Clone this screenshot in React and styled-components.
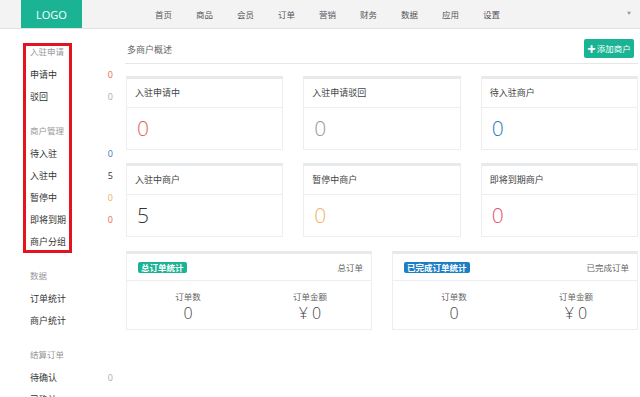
import React from "react";
import styled, { createGlobalStyle } from "styled-components";

const GlobalStyle = createGlobalStyle`
  body {
    margin: 0;
    background: #fff;
    font-family: "Open Sans", "Noto Sans CJK SC", sans-serif;
    color: #333;
    overflow: hidden;
  }
`;

// STYLED COMPONENTS
const Page = styled.div`
  width: 640px;
  height: 397px;
  overflow: hidden;
`;

const TopBar = styled.div`
  display: flex;
  align-items: center;
  height: 28px;
  background: #f3f3f4;
  border-bottom: 1px solid #e3e3e3;
`;

const Logo = styled.div`
  margin-left: 21px;
  width: 61px;
  height: 28px;
  background: #1ab394;
  color: #fff;
  font-size: 11px;
  display: flex;
  align-items: center;
  justify-content: center;
`;

const Nav = styled.div`
  display: flex;
  margin-left: 61px;
`;

const NavItem = styled.span`
  padding: 0 12px;
  width: 17px;
  font-size: 8.5px;
  color: #555;
  white-space: nowrap;
`;

const Caret = styled.span`
  margin-left: auto;
  margin-right: 9px;
  margin-bottom: 3px;
  font-size: 4px;
  color: #999;
`;

const Body = styled.div`
  display: flex;
`;

const Sidebar = styled.div`
  position: relative;
  width: 125px;
  box-sizing: border-box;
  padding: 11px 12px 0 30px;
  flex-shrink: 0;
`;

const Highlight = styled.div`
  position: absolute;
  left: 23px;
  top: 14px;
  width: 49px;
  height: 210px;
  box-sizing: border-box;
  border: 3px solid #e3141e;
`;

const Group = styled.div`
  margin-bottom: 11px;
`;

const GroupTitle = styled.div`
  height: 24px;
  line-height: 24px;
  font-size: 8.5px;
  color: #999;
`;

const SideItem = styled.div`
  display: flex;
  justify-content: space-between;
  height: 22px;
  line-height: 22px;
  font-size: 9px;
  color: #333;
`;

const Count = styled.span`
  font-size: 9px;
  color: ${(p) => p.color || "#999"};
`;

const Main = styled.div`
  flex: 1;
  padding-right: 2px;
`;

const TitleRow = styled.div`
  display: flex;
  align-items: center;
  justify-content: space-between;
  margin-top: 9px;
  padding: 0 4px 5px 2px;
  height: 20px;
  border-bottom: 1px solid #e7e7e7;
`;

const Title = styled.span`
  font-size: 9px;
  color: #666;
  margin-top: 2px;
`;

const AddButton = styled.div`
  height: 19px;
  width: 50px;
  background: #1ab394;
  color: #fff;
  font-size: 8.5px;
  border-radius: 2px;
  display: flex;
  align-items: center;
  justify-content: center;
  gap: 1px;
`;

const CardGrid = styled.div`
  display: grid;
  grid-template-columns: repeat(3, 1fr);
  column-gap: 20px;
  row-gap: 13px;
  margin-top: 12px;
  padding-left: 1px;
`;

const Card = styled.div`
  border: 1px solid #eeeeee;
  border-top: 3px solid #e7eaec;
  background: #fff;
`;

const CardHeader = styled.div`
  height: 28px;
  line-height: 28px;
  padding-left: 8px;
  font-size: 9px;
  color: #444;
  border-bottom: 1px solid #eeeeee;
`;

const CardValue = styled.div`
  height: 41px;
  line-height: 40px;
  padding-left: 10px;
  font-size: 21px;
  font-weight: 300;
  color: ${(p) => p.color};
`;

const PanelRow = styled.div`
  display: grid;
  grid-template-columns: 1fr 1fr;
  column-gap: 20px;
  margin-top: 14px;
  padding-left: 1px;
`;

const Panel = styled.div`
  border: 1px solid #eeeeee;
  border-top: 3px solid #e7eaec;
`;

const PanelHeader = styled.div`
  display: flex;
  align-items: center;
  justify-content: space-between;
  height: 26px;
  padding: 0 8px 0 11px;
  border-bottom: 1px solid #eeeeee;
`;

const Badge = styled.span`
  background: ${(p) => p.bg};
  color: #fff;
  font-size: 8.5px;
  font-weight: bold;
  line-height: 11px;
  padding: 0 3px;
  border-radius: 2px;
`;

const PanelNote = styled.span`
  font-size: 8.5px;
  color: #666;
`;

const PanelBody = styled.div`
  display: grid;
  grid-template-columns: 1fr 1fr;
  height: 48px;
  padding-top: 9px;
  box-sizing: border-box;
`;

const Stat = styled.div`
  display: flex;
  flex-direction: column;
  align-items: center;
`;

const StatLabel = styled.span`
  font-size: 8.5px;
  color: #666;
  line-height: 14px;
`;

const StatValue = styled.span`
  font-size: 16px;
  font-weight: 300;
  color: #444;
  line-height: 19px;
`;

// DATA
const navItems = ["首页", "商品", "会员", "订单", "营销", "财务", "数据", "应用", "设置"];

const sideGroups = [
  {
    title: "入驻申请",
    items: [
      { label: "申请中", count: "0", color: "#e8685b" },
      { label: "驳回", count: "0", color: "#aaa" },
    ],
  },
  {
    title: "商户管理",
    items: [
      { label: "待入驻", count: "0", color: "#2f7fc1" },
      { label: "入驻中", count: "5", color: "#333" },
      { label: "暂停中", count: "0", color: "#f4a963" },
      { label: "即将到期", count: "0", color: "#e8685b" },
      { label: "商户分组" },
    ],
  },
  {
    title: "数据",
    items: [{ label: "订单统计" }, { label: "商户统计" }],
  },
  {
    title: "结算订单",
    items: [{ label: "待确认", count: "0", color: "#aaa" }, { label: "已确认" }],
  },
];

const cards = [
  { title: "入驻申请中", value: "0", color: "#e2665a" },
  { title: "入驻申请驳回", value: "0", color: "#999" },
  { title: "待入驻商户", value: "0", color: "#2b7dbc" },
  { title: "入驻中商户", value: "5", color: "#333" },
  { title: "暂停中商户", value: "0", color: "#f5b26b" },
  { title: "即将到期商户", value: "0", color: "#e9566a" },
];

const panels = [
  { badge: "总订单统计", bg: "#1ab394", note: "总订单" },
  { badge: "已完成订单统计", bg: "#1c7fc6", note: "已完成订单" },
];

// FUNCTIONAL COMPONENT
const App = () => {
  return (
    <Page>
      <GlobalStyle />
      <TopBar>
        <Logo>LOGO</Logo>
        <Nav>
          {navItems.map((n) => (
            <NavItem key={n}>{n}</NavItem>
          ))}
        </Nav>
        <Caret>▼</Caret>
      </TopBar>
      <Body>
        <Sidebar>
          <Highlight />
          {sideGroups.map((g) => (
            <Group key={g.title}>
              <GroupTitle>{g.title}</GroupTitle>
              {g.items.map((it) => (
                <SideItem key={it.label}>
                  <span>{it.label}</span>
                  {it.count && <Count color={it.color}>{it.count}</Count>}
                </SideItem>
              ))}
            </Group>
          ))}
        </Sidebar>
        <Main>
          <TitleRow>
            <Title>多商户概述</Title>
            <AddButton>
              <span style={{ fontWeight: "bold" }}>✚</span>添加商户
            </AddButton>
          </TitleRow>
          <CardGrid>
            {cards.map((c) => (
              <Card key={c.title}>
                <CardHeader>{c.title}</CardHeader>
                <CardValue color={c.color}>{c.value}</CardValue>
              </Card>
            ))}
          </CardGrid>
          <PanelRow>
            {panels.map((p) => (
              <Panel key={p.badge}>
                <PanelHeader>
                  <Badge bg={p.bg}>{p.badge}</Badge>
                  <PanelNote>{p.note}</PanelNote>
                </PanelHeader>
                <PanelBody>
                  <Stat>
                    <StatLabel>订单数</StatLabel>
                    <StatValue>0</StatValue>
                  </Stat>
                  <Stat>
                    <StatLabel>订单金额</StatLabel>
                    <StatValue>¥ 0</StatValue>
                  </Stat>
                </PanelBody>
              </Panel>
            ))}
          </PanelRow>
        </Main>
      </Body>
    </Page>
  );
};

export default App;
